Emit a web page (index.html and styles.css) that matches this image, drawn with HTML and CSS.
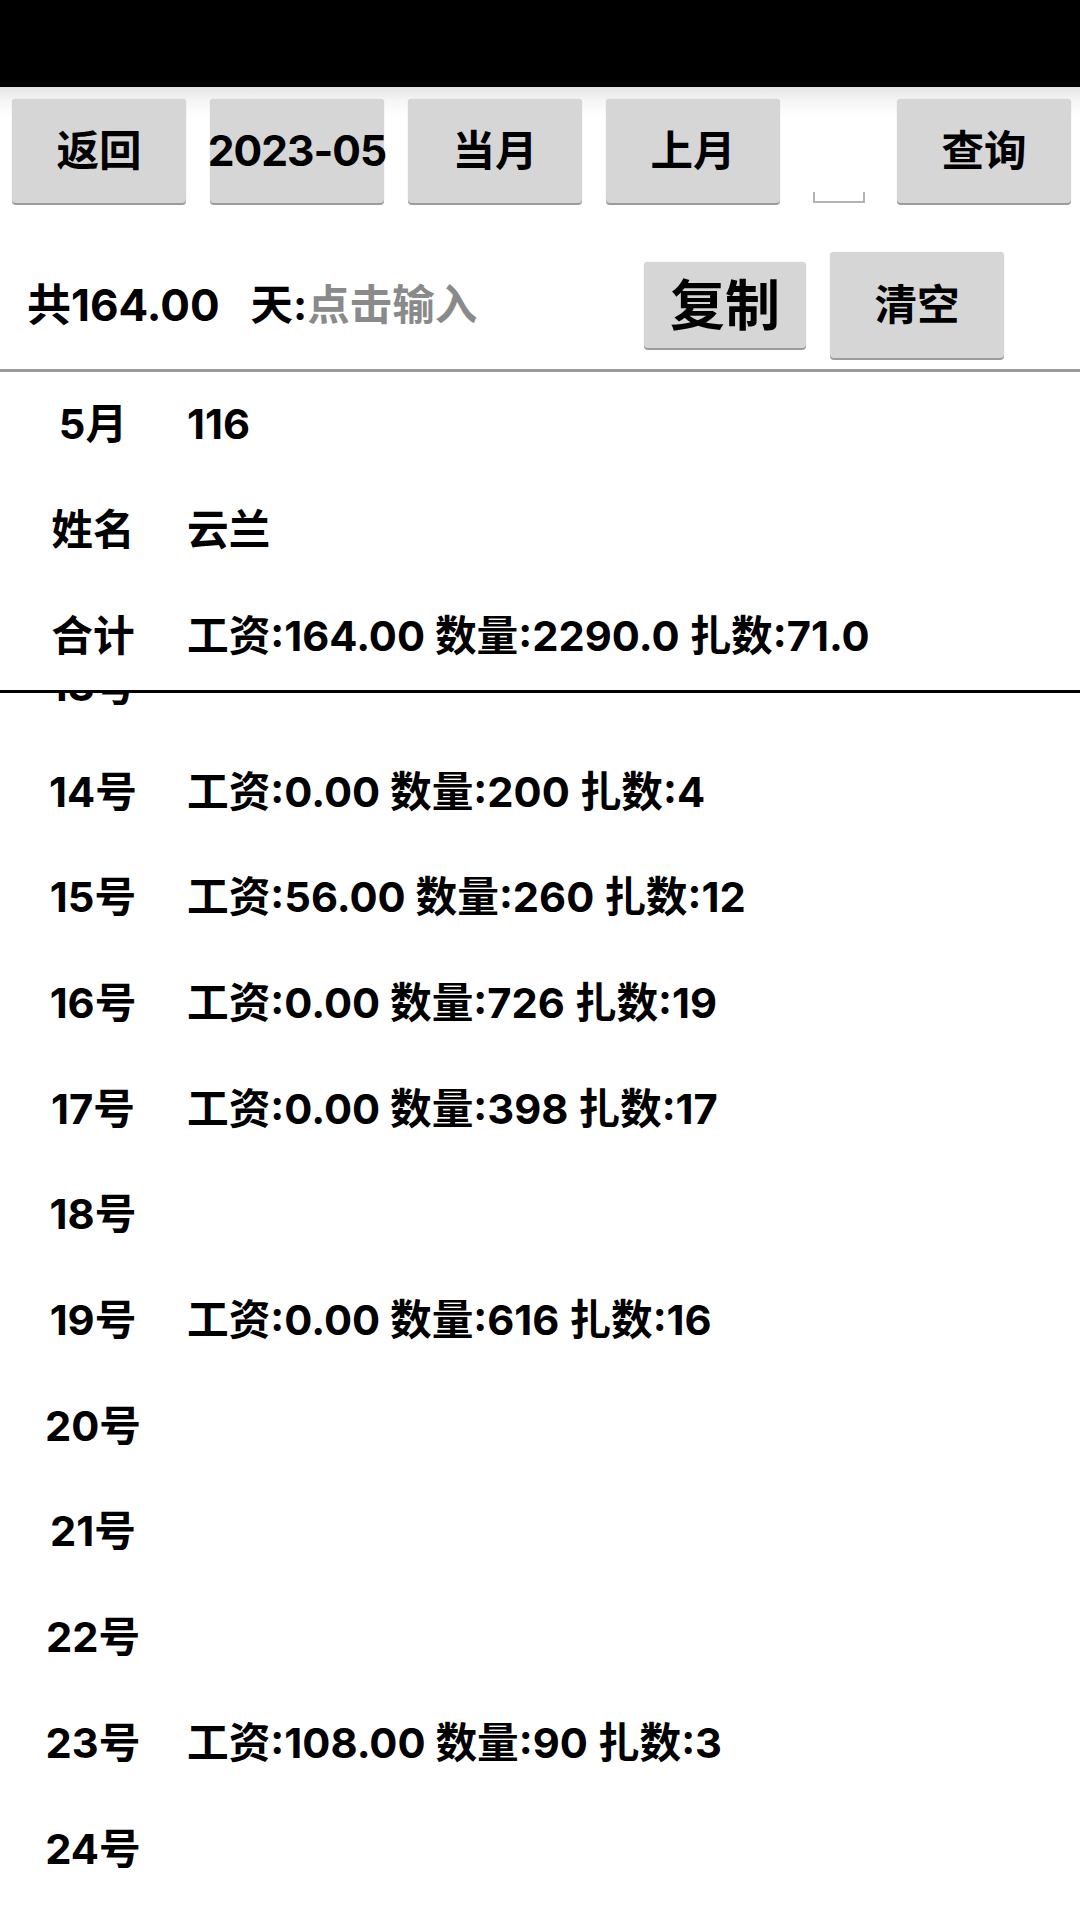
FILE: index.html
```html
<!DOCTYPE html>
<html lang="zh-CN">
<head>
<meta charset="utf-8">
<title>工资查询</title>
<link rel="stylesheet" href="styles.css">
</head>
<body>
<div class="screen">
  <div class="statusbar"></div>
  <div class="toolbar">
    <div class="btn">返回</div>
    <div class="btn btn-date">2023-05</div>
    <div class="btn">当月</div>
    <div class="btn">上月</div>
    <div class="edit"><span class="edit-line"></span></div>
    <div class="btn">查询</div>
  </div>
  <div class="summary">
    <span class="total">共164.00</span>
    <span class="days">天:<span class="hint">点击输入</span></span>
    <div class="spacer"></div>
    <div class="btn btn-copy">复制</div>
    <div class="btn btn-clear">清空</div>
  </div>
  <div class="content">
    <div class="header">
      <div class="row"><span class="label">5月</span><span class="value">116</span></div>
      <div class="row"><span class="label">姓名</span><span class="value">云兰</span></div>
      <div class="row"><span class="label">合计</span><span class="value">工资:164.00 数量:2290.0 扎数:71.0</span></div>
    </div>
    <div class="list">
      <div class="row first"><span class="label">13号</span><span class="value"></span></div>
      <div class="row"><span class="label">14号</span><span class="value">工资:0.00 数量:200 扎数:4</span></div>
      <div class="row"><span class="label">15号</span><span class="value">工资:56.00 数量:260 扎数:12</span></div>
      <div class="row"><span class="label">16号</span><span class="value">工资:0.00 数量:726 扎数:19</span></div>
      <div class="row"><span class="label">17号</span><span class="value">工资:0.00 数量:398 扎数:17</span></div>
      <div class="row"><span class="label">18号</span><span class="value"></span></div>
      <div class="row"><span class="label">19号</span><span class="value">工资:0.00 数量:616 扎数:16</span></div>
      <div class="row"><span class="label">20号</span><span class="value"></span></div>
      <div class="row"><span class="label">21号</span><span class="value"></span></div>
      <div class="row"><span class="label">22号</span><span class="value"></span></div>
      <div class="row"><span class="label">23号</span><span class="value">工资:108.00 数量:90 扎数:3</span></div>
      <div class="row"><span class="label">24号</span><span class="value"></span></div>
      <div class="row"><span class="label">25号</span><span class="value"></span></div>
    </div>
  </div>
</div>
</body>
</html>
```
FILE: styles.css
```css
html, body {
  margin: 0;
  padding: 0;
  background: #ffffff;
}
body {
  font-family: Inter, "Noto Sans CJK SC", sans-serif;
  font-weight: 700;
  color: #000;
}
.screen {
  width: 1080px;
  height: 1920px;
  overflow: hidden;
  display: flex;
  flex-direction: column;
}
.statusbar {
  height: 87px;
  background: #000;
  flex: none;
}
.toolbar {
  flex: none;
  display: flex;
  align-items: flex-start;
  gap: 24px;
  padding: 12px 0 0 12px;
  height: 106px;
  background: linear-gradient(to bottom, #e4e4e4 0px, #f6f6f6 14px, #ffffff 30px);
}
.btn {
  flex: none;
  width: 174px;
  height: 104px;
  background: #d6d6d6;
  border-radius: 4px;
  box-shadow: 0 2px 0 #9c9c9c, 0 0 1px rgba(0,0,0,0.25);
  display: flex;
  align-items: center;
  justify-content: center;
  font-size: 42.5px;
  line-height: 1;
  white-space: nowrap;
}
.btn-date {
  letter-spacing: -1px;
}
.edit {
  flex: none;
  width: 69px;
  height: 104px;
  display: flex;
  align-items: flex-end;
  justify-content: center;
}
.edit-line {
  width: 48px;
  height: 9px;
  border: 2px solid #b4b4b4;
  border-top: none;
}
.summary {
  flex: none;
  height: 128px;
  padding-top: 36px;
  padding-left: 27px;
  display: flex;
  align-items: center;
  font-size: 42.5px;
  line-height: 1;
  border-bottom: 3px solid #9a9a9a;
  box-sizing: content-box;
}
.total {
  font-size: 44px;
  margin-right: 31px;
}
.hint {
  color: #8a8a8a;
}
.spacer {
  flex: 1;
}
.btn-copy {
  width: 162px;
  height: 86px;
  font-size: 55px;
}
.btn-clear {
  width: 174px;
  height: 106px;
  margin-left: 24px;
  margin-right: 76px;
}
.content {
  flex: 1;
  display: flex;
  flex-direction: column;
  overflow: hidden;
}
.header {
  flex: none;
  background: #fff;
  border-bottom: 3px solid #000;
}
.row {
  display: grid;
  grid-template-columns: 186px 1fr;
  align-items: center;
  height: 105.7px;
  font-size: 41.7px;
  line-height: 1;
  white-space: nowrap;
}
.header .row {
  height: 106px;
}
.label {
  text-align: center;
}
.value {
  padding-left: 1px;
}
.list {
  flex: 1;
  overflow: hidden;
}
.list .first {
  margin-top: -59px;
}
```
